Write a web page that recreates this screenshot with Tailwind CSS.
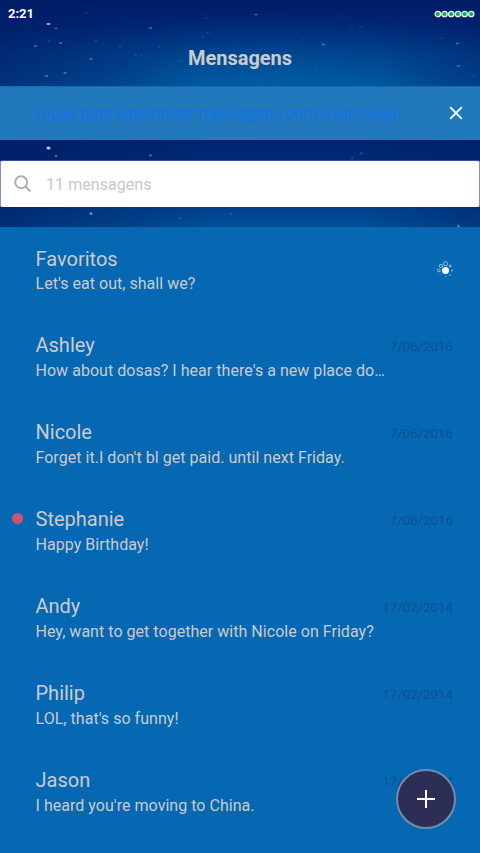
<!DOCTYPE html>
<html lang="pt"><head><meta charset="utf-8"><title>Mensagens</title>
<script src="https://cdn.jsdelivr.net/npm/@tailwindcss/browser@4"></script></head>
<body class="w-[480px] h-[853px] overflow-hidden bg-[#0667b3] font-[Roboto,sans-serif] text-[#cbcbcd]">
<div class="relative w-[480px] h-[853px] overflow-hidden flex flex-col">
<header class="relative h-[86px] shrink-0">
<svg class="absolute inset-0" width="480" height="86" viewBox="0 0 480 86">
<defs><linearGradient id="sky" x1="0" y1="0" x2="0" y2="1"><stop offset="0" stop-color="#001c66"/><stop offset=".3" stop-color="#002673"/><stop offset=".65" stop-color="#003f8a"/><stop offset="1" stop-color="#005197"/></linearGradient>
<radialGradient id="glow" gradientUnits="userSpaceOnUse" cx="0" cy="0" r="1" gradientTransform="translate(275 110) scale(260 100)"><stop offset="0" stop-color="#0068aa" stop-opacity=".7"/><stop offset=".35" stop-color="#0064a8" stop-opacity=".45"/><stop offset=".7" stop-color="#0060a5" stop-opacity=".12"/><stop offset="1" stop-color="#0060a5" stop-opacity="0"/></radialGradient>
<linearGradient id="side"><stop offset="0" stop-color="#001c66" stop-opacity=".6"/><stop offset=".4" stop-color="#001c66" stop-opacity="0"/><stop offset=".8" stop-color="#001c66" stop-opacity="0"/><stop offset="1" stop-color="#001c66" stop-opacity=".35"/></linearGradient></defs>
<rect width="480" height="86" fill="url(#sky)"/><rect width="480" height="86" fill="url(#glow)"/><rect width="480" height="86" fill="url(#side)"/>
<g fill="#80b4d8"><ellipse cx="48.500" cy="24" rx="2.200" ry="1.100" fill="#a3c4e3" opacity=".9"/><g opacity=".45"><ellipse cx="56" cy="28.500" rx="1.700" ry=".9"/><ellipse cx="150.500" cy="28" rx="1.700" ry=".9"/><ellipse cx="35.500" cy="46" rx="1.800" ry=".9"/><ellipse cx="60.500" cy="43" rx="1.700" ry=".9"/><ellipse cx="91" cy="59" rx="2" ry="1.100"/><ellipse cx="65" cy="73" rx="1.800" ry=".9"/><ellipse cx="46.500" cy="76" rx="2" ry="1"/><ellipse cx="256" cy="14.500" rx="1.800" ry=".7"/><ellipse cx="323.500" cy="44.500" rx="2" ry="1.100"/><ellipse cx="457.500" cy="43.500" rx="1.800" ry=".9"/><ellipse cx="458.500" cy="66" rx="2" ry=".9"/></g>
<g opacity=".13"><ellipse cx="87" cy="13" rx="2" ry="1"/><ellipse cx="49" cy="41" rx="2" ry="1"/><ellipse cx="96" cy="41" rx="2" ry="1"/><ellipse cx="120" cy="47" rx="2" ry="1"/><ellipse cx="135.500" cy="55" rx="2" ry="1"/><ellipse cx="141" cy="55" rx="1.500" ry="1"/><ellipse cx="159" cy="47" rx="1.500" ry="1"/><ellipse cx="180" cy="61" rx="2" ry="1"/><ellipse cx="163" cy="72" rx="2" ry=".8"/><ellipse cx="207.500" cy="33" rx="2" ry="1"/><ellipse cx="203" cy="37" rx="1.500" ry="1"/><ellipse cx="207" cy="18" rx="2" ry=".8"/><ellipse cx="352" cy="29" rx="1.500" ry="1"/><ellipse cx="361" cy="27" rx="2" ry=".8"/><ellipse cx="304" cy="38" rx="2" ry=".8"/><ellipse cx="316" cy="69" rx="2" ry=".8"/><ellipse cx="258" cy="80" rx="2" ry=".8"/><ellipse cx="442" cy="38" rx="2" ry=".8"/><ellipse cx="474" cy="76" rx="2" ry=".8"/></g></g></svg>
<div class="relative flex h-[27px] items-center justify-between pl-2 pr-[5px] text-white">
<span class="text-[13px] font-bold leading-4">2:21</span>
<svg width="41" height="8" viewBox="0 0 41 8" fill="#16a565" stroke="#ededf2" stroke-width="1.300"><circle cx="3.800" cy="4" r="2.700"/><circle cx="10.500" cy="4" r="2.700"/><circle cx="17.200" cy="4" r="2.700"/><circle cx="23.900" cy="4" r="2.700"/><circle cx="30.600" cy="4" r="2.700"/><circle cx="37.200" cy="4" r="2.700"/></svg></div>
<h1 class="relative mt-[17px] text-center text-[20px] font-bold leading-7">Mensagens</h1>
</header>
<div class="relative flex h-[54px] shrink-0 items-center justify-between border-t border-[#146baf] bg-[#2178bb] pl-8 pr-[17px]">
<span class="text-[16px] text-[#0f73ea] whitespace-nowrap">Toque para sincronizar mensagens com a Mi Cloud.</span>
<svg class="-mt-px" width="14" height="14" viewBox="0 0 14 14" stroke="white" stroke-width="1.800"><path d="M1.200 1.200 12.800 12.800M12.800 1.200 1.200 12.800"/></svg></div>
<section class="relative h-[87px] shrink-0 pt-[21px]">
<svg class="absolute inset-0" width="480" height="87" viewBox="0 0 480 87"><defs><linearGradient id="lower" x2="0" y2="1"><stop stop-color="#00256f"/><stop offset=".25" stop-color="#002b76"/><stop offset=".75" stop-color="#00408a"/><stop offset="1" stop-color="#004f98"/></linearGradient><linearGradient id="edges"><stop stop-color="#001c62" stop-opacity=".65"/><stop offset=".45" stop-color="#001c62" stop-opacity="0"/><stop offset=".75" stop-color="#001c62" stop-opacity="0"/><stop offset="1" stop-color="#001c62" stop-opacity=".45"/></linearGradient></defs><rect width="480" height="87" fill="url(#lower)"/><rect width="480" height="87" fill="url(#edges)"/>
<g fill="#80b4dd"><ellipse cx="48.500" cy="8" rx="2" ry="1.600" fill="#b5cdec"/><circle cx="56" cy="16" r="1.300" opacity=".5"/><circle cx="150.500" cy="15.500" r="1.300" opacity=".5"/><circle cx="91" cy="73.500" r="1.500" opacity=".7"/><g opacity=".2"><circle cx="352" cy="18" r="1.500"/><circle cx="361" cy="13.500" r="1.500"/><circle cx="180" cy="78" r="1.300"/><circle cx="231" cy="74" r="1.300"/></g><circle cx="458.500" cy="86" r="1.500" opacity=".5"/></g></svg>
<div class="relative flex h-[46px] items-center rounded-[2px] bg-white pl-[14px] shadow-[inset_1px_0_#8094c2,inset_-1px_0_#8094c2,0_-1px_#335591]">
<svg width="18" height="18" viewBox="0 0 18 18" fill="none" stroke="#adadad" stroke-width="1.900"><circle cx="7.200" cy="7.200" r="6"/><path d="m11.600 11.600 5 5"/></svg>
<span class="ml-[14px] pt-px text-[16px] tracking-[0.06px] text-[#c8c8c8]">11 mensagens</span></div></section>
<main class="relative flex flex-col pt-5 [&_h2]:text-[20px] [&_h2]:leading-6 [&_p]:text-[16px] [&_p]:tracking-[0.035px] [&_p]:leading-5 [&_p]:mt-[4px] [&_article]:relative [&_article]:h-[87px] [&_article]:shrink-0 [&_article]:pl-[35.5px] [&_article]:pr-[27px] [&_time]:text-[13.3px] [&_time]:leading-5 [&_time]:text-[#0a5290] [&_time]:pt-[4px] [&_div]:flex [&_div]:justify-between [&_div]:h-6">
<article class="h-[86px]!"><div><h2>Favoritos</h2><svg class="mt-[14px] h-4 w-4" viewBox="0 0 16 16" fill="none" stroke="#b5d2e9" stroke-width=".8"><circle cx="8.500" cy="9.500" r="3.500" fill="white" stroke="none"/><circle cx="8.500" cy="2.800" r="2.100"/><circle cx="3.900" cy="4.900" r="1.600"/><circle cx="1.900" cy="9.500" r="1.400"/><circle cx="13.200" cy="5" r="1.100"/><circle cx="15" cy="9.500" r=".6"/><circle cx="13" cy="14" r=".4"/><circle cx="8.500" cy="15.300" r=".3"/><circle cx="4" cy="14" r=".2" opacity=".5"/></svg></div><p class="mt-[3px]!">Let's eat out, shall we?</p></article>
<article><div><h2>Ashley</h2><time>7/06/2016</time></div><p>How about dosas? I hear there's a new place do…</p></article>
<article><div><h2>Nicole</h2><time>7/06/2016</time></div><p>Forget it.I don't bl get paid. until next Friday.</p></article>
<article><i class="absolute left-3 top-[6px] size-[11px] rounded-full bg-[#d44f70]"></i><div><h2>Stephanie</h2><time>7/06/2016</time></div><p>Happy Birthday!</p></article>
<article><div><h2>Andy</h2><time>17/02/2014</time></div><p>Hey, want to get together with Nicole on Friday?</p></article>
<article><div><h2>Philip</h2><time>17/02/2014</time></div><p>LOL, that's so funny!</p></article>
<article><div><h2>Jason</h2><time>17/02/2014</time></div><p>I heard you're moving to China.</p></article>
</main>
<button aria-label="Nova mensagem" class="absolute left-[396px] top-[769px] flex size-[60px] items-center justify-center rounded-full border-2 border-[#6f8cae] bg-[#2d2e55]"><svg width="18" height="18" viewBox="0 0 18 18" stroke="white" stroke-width="2"><path d="M9 0V18M0 9H18"/></svg></button>
</div></body></html>
